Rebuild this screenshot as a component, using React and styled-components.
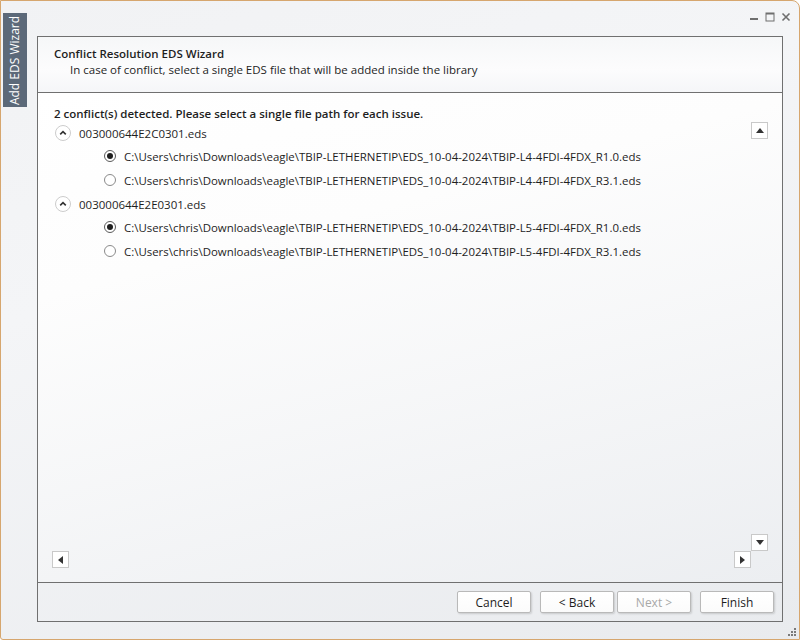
import React, { useState } from "react";
import styled, { createGlobalStyle } from "styled-components";

const GlobalStyle = createGlobalStyle`
  html, body {
    margin: 0;
    padding: 0;
  }
  body {
    font-family: "Open Sans", "Noto Sans", sans-serif;
    font-size: 11.5px;
    color: #1e1e1e;
  }
`;

const conflicts = [
  {
    name: "003000644E2C0301.eds",
    paths: [
      "C:\\Users\\chris\\Downloads\\eagle\\TBIP-LETHERNETIP\\EDS_10-04-2024\\TBIP-L4-4FDI-4FDX_R1.0.eds",
      "C:\\Users\\chris\\Downloads\\eagle\\TBIP-LETHERNETIP\\EDS_10-04-2024\\TBIP-L4-4FDI-4FDX_R3.1.eds",
    ],
  },
  {
    name: "003000644E2E0301.eds",
    paths: [
      "C:\\Users\\chris\\Downloads\\eagle\\TBIP-LETHERNETIP\\EDS_10-04-2024\\TBIP-L5-4FDI-4FDX_R1.0.eds",
      "C:\\Users\\chris\\Downloads\\eagle\\TBIP-LETHERNETIP\\EDS_10-04-2024\\TBIP-L5-4FDI-4FDX_R3.1.eds",
    ],
  },
];

const App = () => {
  const [picked, setPicked] = useState([0, 0]);

  return (
    <>
      <GlobalStyle />
      <Window>
        <SideColumn>
          <SideTab>
            <span>Add EDS Wizard</span>
          </SideTab>
        </SideColumn>
        <MainColumn>
          <TitleBar>
            <CtrlBtn>
              <svg width="10" height="10" viewBox="0 0 10 10">
                <rect x="1" y="6" width="8" height="2" fill="#6f6f6f" />
              </svg>
            </CtrlBtn>
            <CtrlBtn>
              <svg width="10" height="10" viewBox="0 0 10 10">
                <rect x="1" y="1" width="8" height="8" fill="none" stroke="#6f6f6f" strokeWidth="1" />
                <rect x="1" y="1" width="8" height="1.5" fill="#6f6f6f" />
              </svg>
            </CtrlBtn>
            <CtrlBtn>
              <svg width="10" height="10" viewBox="0 0 10 10">
                <path d="M1.5 1.5 L8.5 8.5 M8.5 1.5 L1.5 8.5" stroke="#6f6f6f" strokeWidth="1.6" />
              </svg>
            </CtrlBtn>
          </TitleBar>
          <Panel>
            <Header>
              <HeaderTitle>Conflict Resolution EDS Wizard</HeaderTitle>
              <HeaderSub>In case of conflict, select a single EDS file that will be added inside the library</HeaderSub>
            </Header>
            <Content>
              <Summary>2 conflict(s) detected. Please select a single file path for each issue.</Summary>
              {conflicts.map((c, gi) => (
                <Group key={c.name}>
                  <GroupHead>
                    <Chevron>
                      <svg width="16" height="16" viewBox="0 0 16 16">
                        <circle cx="8" cy="8" r="7.5" fill="#fff" stroke="#cccccc" />
                        <path d="M5.2 9.4 L8 6.6 L10.8 9.4" fill="none" stroke="#333" strokeWidth="1.6" />
                      </svg>
                    </Chevron>
                    {c.name}
                  </GroupHead>
                  {c.paths.map((p, pi) => (
                    <Option
                      key={p}
                      onClick={() => setPicked(picked.map((v, i) => (i === gi ? pi : v)))}
                    >
                      <Radio $on={picked[gi] === pi} />
                      {p}
                    </Option>
                  ))}
                </Group>
              ))}
              <ScrollBtn $top="29px" $right="14px">
                <svg width="8" height="5" viewBox="0 0 8 5"><path d="M0 5 L4 0 L8 5 Z" fill="#333" /></svg>
              </ScrollBtn>
              <ScrollBtn $bottom="31px" $right="14px">
                <svg width="8" height="5" viewBox="0 0 8 5"><path d="M0 0 L4 5 L8 0 Z" fill="#333" /></svg>
              </ScrollBtn>
              <ScrollBtn $bottom="14px" $left="14px">
                <svg width="5" height="8" viewBox="0 0 5 8"><path d="M5 0 L0 4 L5 8 Z" fill="#333" /></svg>
              </ScrollBtn>
              <ScrollBtn $bottom="14px" $right="31px">
                <svg width="5" height="8" viewBox="0 0 5 8"><path d="M0 0 L5 4 L0 8 Z" fill="#333" /></svg>
              </ScrollBtn>
            </Content>
            <Footer>
              <Btn>Cancel</Btn>
              <Btn>&lt; Back</Btn>
              <Btn disabled>Next &gt;</Btn>
              <Btn $gap>Finish</Btn>
            </Footer>
          </Panel>
        </MainColumn>
        <Grip>
          <svg width="8" height="8" viewBox="0 0 8 8">
            <g fill="#7a7a7a">
              <rect x="6" y="0" width="2" height="2" />
              <rect x="3" y="3" width="2" height="2" />
              <rect x="6" y="3" width="2" height="2" />
              <rect x="0" y="6" width="2" height="2" />
              <rect x="3" y="6" width="2" height="2" />
              <rect x="6" y="6" width="2" height="2" />
            </g>
          </svg>
        </Grip>
      </Window>
    </>
  );
};

const Window = styled.div`
  position: relative;
  box-sizing: border-box;
  width: 800px;
  height: 640px;
  display: flex;
  border: 1px solid #d6a66e;
  border-radius: 0 8px 0 3px;
  background: linear-gradient(160deg, #f1f2f4 0%, #f4f5f7 35%, #e9ebee 100%);
  overflow: hidden;
`;

const SideColumn = styled.div`
  width: 36px;
  flex-shrink: 0;
  padding: 12px 0 0 2px;
  box-sizing: border-box;
`;

const SideTab = styled.div`
  width: 24px;
  height: 94px;
  background: #5c6979;
  display: flex;
  align-items: center;
  justify-content: center;
  span {
    transform: rotate(-90deg);
    white-space: nowrap;
    color: #fff;
    font-size: 12px;
  }
`;

const MainColumn = styled.div`
  flex: 1;
  display: flex;
  flex-direction: column;
  padding: 0 16px 17px 0;
`;

const TitleBar = styled.div`
  height: 35px;
  display: flex;
  justify-content: flex-end;
  align-items: flex-start;
  gap: 6px;
  padding: 10px 0 0 0;
  box-sizing: border-box;
  margin-right: -8px;
`;

const CtrlBtn = styled.div`
  width: 10px;
  height: 12px;
  display: flex;
  align-items: center;
  justify-content: center;
`;

const Panel = styled.div`
  flex: 1;
  display: flex;
  flex-direction: column;
  border: 1px solid #707070;
`;

const Header = styled.div`
  height: 56px;
  box-sizing: border-box;
  border-bottom: 1px solid #707070;
  background: linear-gradient(180deg, #f6f7f8 0%, #fcfcfd 60%, #f5f6f8 100%);
  padding: 9px 0 0 16px;
`;

const HeaderTitle = styled.div`
  font-weight: 600;
  font-size: 11.5px;
  line-height: 16px;
`;

const HeaderSub = styled.div`
  padding-left: 16px;
  line-height: 16px;
`;

const Content = styled.div`
  position: relative;
  flex: 1;
  padding: 13px 0 0 16px;
  background: linear-gradient(165deg, #ffffff 0%, #fdfdfd 30%, #eceef1 100%);
`;

const Summary = styled.div`
  font-weight: 600;
  line-height: 16px;
`;

const Group = styled.div`
  display: flex;
  flex-direction: column;
  & + & {
    margin-top: 1px;
  }
`;

const GroupHead = styled.div`
  display: flex;
  align-items: center;
  height: 22px;
  gap: 8px;
  padding-left: 1px;
`;

const Chevron = styled.span`
  display: flex;
  width: 16px;
  height: 16px;
`;

const Option = styled.div`
  display: flex;
  align-items: center;
  height: 24px;
  gap: 8px;
  padding-left: 50px;
  font-size: 11.45px;
  cursor: default;
`;

const Radio = styled.span`
  box-sizing: border-box;
  width: 12px;
  height: 12px;
  border-radius: 50%;
  border: 1px solid ${(p) => (p.$on ? "#5a5a5a" : "#8a8a8a")};
  background: #fff;
  display: flex;
  align-items: center;
  justify-content: center;
  &::after {
    content: "";
    width: 6px;
    height: 6px;
    border-radius: 50%;
    background: ${(p) => (p.$on ? "#1e1e1e" : "transparent")};
  }
`;

const ScrollBtn = styled.div`
  position: absolute;
  top: ${(p) => p.$top || "auto"};
  bottom: ${(p) => p.$bottom || "auto"};
  left: ${(p) => p.$left || "auto"};
  right: ${(p) => p.$right || "auto"};
  box-sizing: border-box;
  width: 17px;
  height: 17px;
  border: 1px solid #c9c9c9;
  background: #fff;
  display: flex;
  align-items: center;
  justify-content: center;
`;

const Footer = styled.div`
  height: 39px;
  border-top: 1px solid #707070;
  display: flex;
  justify-content: flex-end;
  align-items: flex-start;
  padding: 8px 8px 0 0;
  box-sizing: border-box;
  gap: 3px;
`;

const Btn = styled.button`
  width: 74px;
  height: 22px;
  margin-left: ${(p) => (p.$gap ? "6px" : "0")};
  font-family: inherit;
  font-size: 12px;
  color: #1e1e1e;
  background: linear-gradient(180deg, #ffffff 0%, #fbfbfb 100%);
  border: 1px solid #b9b9b9;
  border-radius: 2px;
  box-shadow: 1px 1px 2px rgba(0, 0, 0, 0.15);
  &:first-child {
    margin-right: 6px;
  }
  &:disabled {
    color: #a8a8a8;
  }
`;

const Grip = styled.div`
  position: absolute;
  right: 3px;
  bottom: 3px;
  width: 8px;
  height: 8px;
  display: flex;
`;

export default App;
